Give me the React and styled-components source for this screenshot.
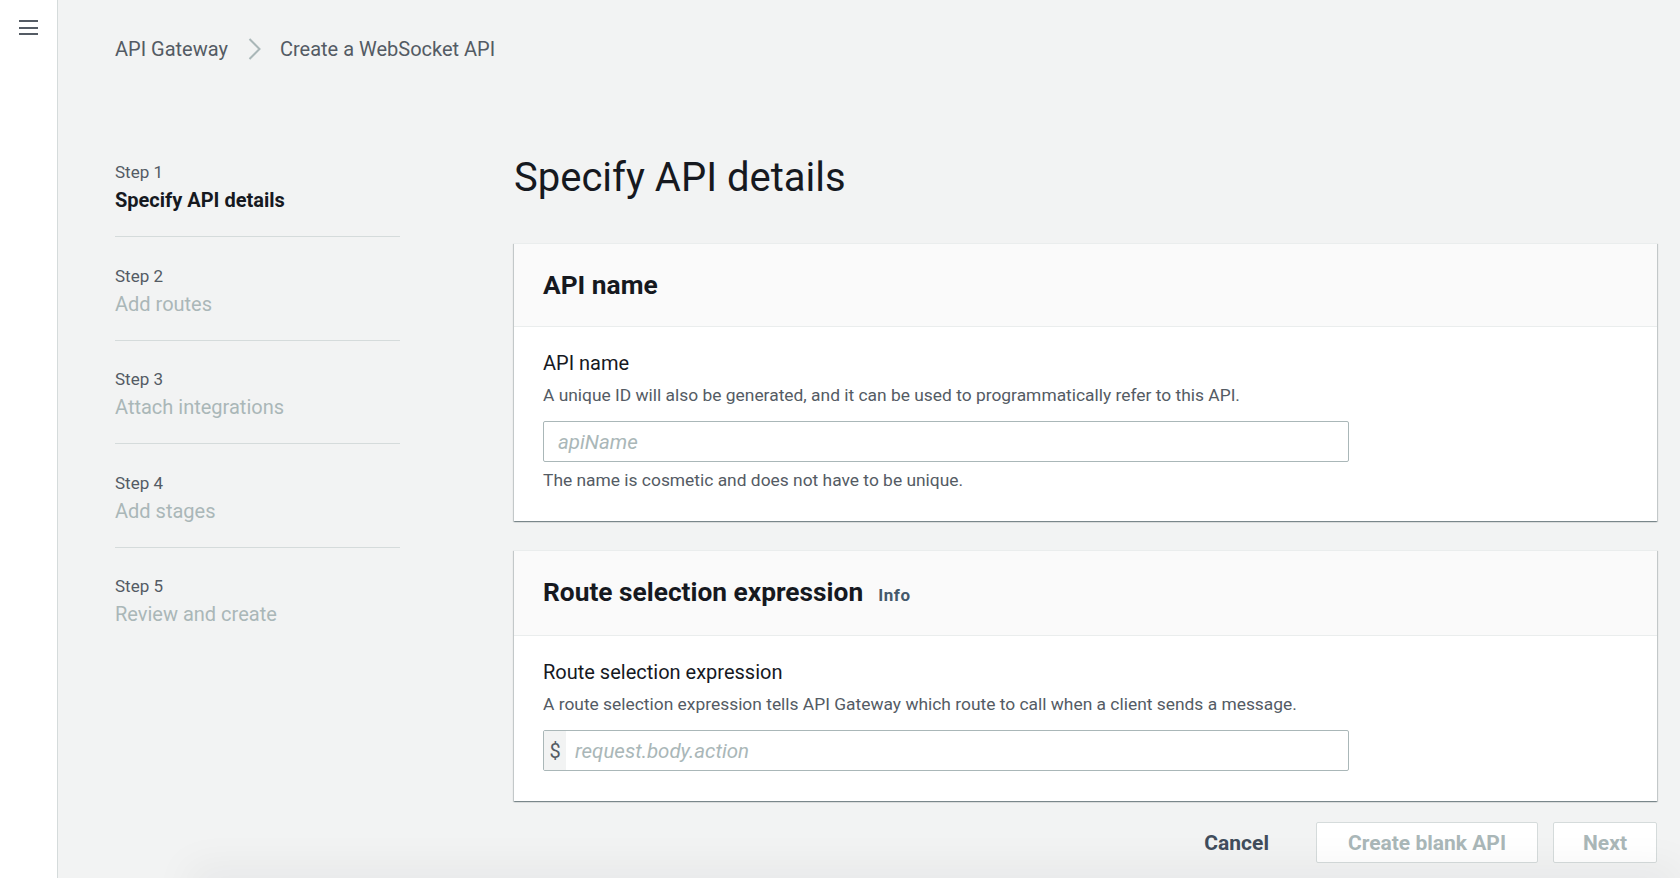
import React from "react";
import styled, { createGlobalStyle } from "styled-components";

const GlobalStyle = createGlobalStyle`
  html, body {
    margin: 0;
    padding: 0;
    background: #f2f3f3;
    font-family: Roboto, "Noto Sans", Arial, sans-serif;
    color: #16191f;
  }
  * { box-sizing: border-box; }
`;

const Shell = styled.div`
  display: flex;
  min-height: 878px;
  overflow: hidden;
`;

const SideRail = styled.aside`
  width: 58px;
  flex-shrink: 0;
  background: #ffffff;
  border-right: 1px solid #d5dbdb;
  padding: 20px 0 0 19px;
`;

const MenuButton = styled.button`
  display: flex;
  flex-direction: column;
  gap: 4.5px;
  width: 19px;
  padding: 0;
  border: 0;
  background: none;
  cursor: pointer;

  span {
    display: block;
    height: 2px;
    background: #545b64;
  }
`;

const Main = styled.main`
  flex: 1;
  padding: 0 23px 0 57px;
  position: relative;
`;

const Breadcrumbs = styled.nav`
  display: flex;
  align-items: center;
  height: 96px;
  padding-top: 2px;
  gap: 19px;
  font-size: 20px;
  color: #545b64;
`;

const Crumb = styled.span`
  color: #545b64;
`;

const Layout = styled.div`
  display: grid;
  grid-template-columns: 285px 1fr;
  column-gap: 114px;
  margin-top: 58px;
`;

const StepList = styled.ol`
  list-style: none;
  margin: 0;
  padding: 1px 0 0;
`;

const StepItem = styled.li`
  padding: 6px 0 22px;
  margin-bottom: 21.5px;
  border-bottom: ${(p) => (p.$last ? "none" : "1px solid #d5dbdb")};
`;

const StepLabel = styled.div`
  font-size: 17px;
  color: #545b64;
  line-height: 22px;
`;

const StepTitle = styled.div`
  font-size: 20px;
  line-height: 28px;
  margin-top: 3px;
  font-weight: ${(p) => (p.$active ? 700 : 400)};
  color: ${(p) => (p.$active ? "#16191f" : "#aab7b8")};
`;

const Content = styled.div`
  display: flex;
  flex-direction: column;
`;

const PageTitle = styled.h1`
  margin: 0 0 41px;
  font-size: 40px;
  line-height: 48px;
  font-weight: 400;
  color: #16191f;
`;

const Card = styled.section`
  background: #ffffff;
  margin-bottom: 29px;
  box-shadow: 0 1px 1px 0 rgba(0, 28, 36, 0.3),
    1px 1px 1px 0 rgba(0, 28, 36, 0.15),
    -1px 1px 1px 0 rgba(0, 28, 36, 0.15);
  border-top: 1px solid #eaeded;
`;

const CardHeader = styled.header`
  display: flex;
  align-items: baseline;
  gap: 15px;
  height: ${(p) => p.$h || "83px"};
  padding: 25px 29px 0;
  background: #fafafa;
  border-bottom: 1px solid #eaeded;
`;

const CardTitle = styled.h2`
  margin: 0;
  font-size: 26.3px;
  line-height: 32px;
  font-weight: 700;
  color: #16191f;
`;

const InfoLink = styled.a`
  font-size: 17px;
  font-weight: 700;
  letter-spacing: 0.6px;
  color: #44596b;
  text-decoration: none;
`;

const CardBody = styled.div`
  padding: 23px 29px 30px;
`;

const FieldLabel = styled.div`
  font-size: 20px;
  line-height: 26px;
  color: #16191f;
`;

const FieldDescription = styled.div`
  font-size: 17.4px;
  line-height: 22px;
  color: #545b64;
  margin-top: 8px;
`;

const InputBox = styled.div`
  display: flex;
  align-items: stretch;
  width: 806px;
  height: 41px;
  margin-top: 15px;
  border: 1px solid #aab7b8;
  border-radius: 2px;
  background: #ffffff;
  overflow: hidden;
`;

const Prefix = styled.span`
  display: flex;
  align-items: center;
  justify-content: center;
  width: 22px;
  background: #f2f3f3;
  color: #545b64;
  font-size: 20px;
`;

const TextInput = styled.input`
  flex: 1;
  border: 0;
  outline: none;
  padding: 0 ${(p) => (p.$prefixed ? "9px" : "14px")};
  font-family: inherit;
  font-size: 20.5px;
  color: #16191f;
  background: transparent;

  &::placeholder {
    color: #aab7b8;
    font-style: italic;
  }
`;

const Hint = styled.div`
  font-size: 17.4px;
  line-height: 22px;
  color: #545b64;
  margin-top: 7px;
`;

const Actions = styled.div`
  display: flex;
  justify-content: flex-end;
  align-items: center;
  gap: 15px;
  margin-top: -8px;
`;

const LinkButton = styled.button`
  border: 0;
  background: none;
  font-family: inherit;
  font-size: 21px;
  font-weight: 700;
  color: #414d5c;
  padding: 0 32px 0 0;
  cursor: pointer;
`;

const Button = styled.button`
  height: 41px;
  padding: 0 ${(p) => p.$pad || "29px"};
  border: 1px solid #d5dbdb;
  border-radius: 2px;
  background: #ffffff;
  font-family: inherit;
  font-size: 21px;
  font-weight: 700;
  color: #aab7b8;
  cursor: default;
`;

const FooterShade = styled.div`
  position: absolute;
  left: 130px;
  right: 0;
  top: 878px;
  height: 40px;
  box-shadow: 0 -12px 40px rgba(0, 28, 36, 0.05);
`;

const Chevron = () => (
  <svg width="14" height="24" viewBox="0 0 14 24" fill="none">
    <path d="M2.5 2l10 10-10 10" stroke="#aab7b8" strokeWidth="2" />
  </svg>
);

const steps = [
  { n: 1, title: "Specify API details", active: true },
  { n: 2, title: "Add routes" },
  { n: 3, title: "Attach integrations" },
  { n: 4, title: "Add stages" },
  { n: 5, title: "Review and create" },
];

export default function App() {
  return (
    <>
      <GlobalStyle />
      <Shell>
        <SideRail>
          <MenuButton aria-label="Open navigation">
            <span />
            <span />
            <span />
          </MenuButton>
        </SideRail>
        <Main>
          <Breadcrumbs>
            <Crumb>API Gateway</Crumb>
            <Chevron />
            <Crumb>Create a WebSocket API</Crumb>
          </Breadcrumbs>
          <Layout>
            <StepList>
              {steps.map((s, i) => (
                <StepItem key={s.n} $last={i === steps.length - 1}>
                  <StepLabel>Step {s.n}</StepLabel>
                  <StepTitle $active={s.active}>{s.title}</StepTitle>
                </StepItem>
              ))}
            </StepList>
            <Content>
              <PageTitle>Specify API details</PageTitle>
              <Card>
                <CardHeader>
                  <CardTitle>API name</CardTitle>
                </CardHeader>
                <CardBody>
                  <FieldLabel>API name</FieldLabel>
                  <FieldDescription>
                    A unique ID will also be generated, and it can be used to
                    programmatically refer to this API.
                  </FieldDescription>
                  <InputBox>
                    <TextInput placeholder="apiName" />
                  </InputBox>
                  <Hint>The name is cosmetic and does not have to be unique.</Hint>
                </CardBody>
              </Card>
              <Card>
                <CardHeader $h="85px">
                  <CardTitle>Route selection expression</CardTitle>
                  <InfoLink href="#">Info</InfoLink>
                </CardHeader>
                <CardBody>
                  <FieldLabel>Route selection expression</FieldLabel>
                  <FieldDescription>
                    A route selection expression tells API Gateway which route to
                    call when a client sends a message.
                  </FieldDescription>
                  <InputBox>
                    <Prefix>$</Prefix>
                    <TextInput $prefixed placeholder="request.body.action" />
                  </InputBox>
                </CardBody>
              </Card>
              <Actions>
                <LinkButton>Cancel</LinkButton>
                <Button $pad="31px">Create blank API</Button>
                <Button>Next</Button>
              </Actions>
            </Content>
          </Layout>
          <FooterShade />
        </Main>
      </Shell>
    </>
  );
}
